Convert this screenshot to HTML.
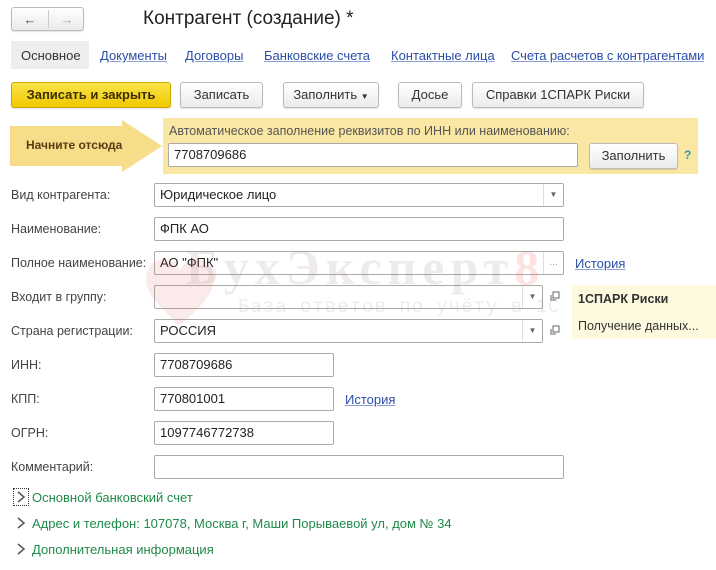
<!DOCTYPE html>
<html><head><meta charset="utf-8"><style>
*{box-sizing:border-box}
body{margin:0;width:716px;height:570px;background:#fff;font-family:"Liberation Sans",sans-serif;font-size:12.5px;color:#333;position:relative;overflow:hidden}
.a{position:absolute;white-space:nowrap}
.btn{position:absolute;height:26px;border:1px solid #bbb;border-radius:3px;background:linear-gradient(#fff,#ebebeb);text-align:center;line-height:24px;color:#333;font-size:13px;box-shadow:0 1px 1px rgba(0,0,0,.12)}
.in{position:absolute;height:24px;border:1px solid #aaa;border-radius:2px;background:#fff;line-height:22px;padding-left:5px;font-size:13px;color:#222}
.lbl{position:absolute;left:11px;font-size:12.5px;color:#444}
.lnk{position:absolute;color:#2a4fa8;text-decoration:underline;text-decoration-color:#8aa0d0;font-size:13px}
.dd{position:absolute;right:0;top:0;width:20px;height:22px;border-left:1px solid #ddd;font-size:8px;color:#666;text-align:center;line-height:22px}
.op{position:absolute;width:22px;height:24px}
.grn{position:absolute;color:#208a4a;font-size:13px;left:32px}
.chev{position:absolute;left:13px;width:16px;height:18px}
</style></head><body>
<div class="btn" style="left:11px;top:7px;width:73px;height:24px;padding:0"><span style="position:absolute;left:0;width:36px;font-weight:bold;color:#444">&#8592;</span><span style="position:absolute;left:36px;top:2px;height:18px;border-left:1px solid #ccc"></span><span style="position:absolute;left:37px;width:36px;color:#aaa">&#8594;</span></div>
<div class="a" style="left:143px;top:8px;font-size:19px;color:#222">Контрагент (создание) *</div>
<div class="a" style="left:11px;top:41px;width:78px;height:28px;background:#eee;border-radius:2px"></div>
<div class="a" style="left:21px;top:48px;font-size:13px;color:#333">Основное</div>
<div class="lnk" style="left:100px;top:48px">Документы</div>
<div class="lnk" style="left:185px;top:48px">Договоры</div>
<div class="lnk" style="left:264px;top:48px">Банковские счета</div>
<div class="lnk" style="left:391px;top:48px">Контактные лица</div>
<div class="lnk" style="left:511px;top:48px;letter-spacing:-0.1px">Счета расчетов с контрагентами</div>
<div class="btn" style="left:11px;top:82px;width:160px;background:linear-gradient(#fbe44a,#f0c800);border-color:#c9a800;font-weight:bold;color:#3a3000">Записать и закрыть</div>
<div class="btn" style="left:180px;top:82px;width:83px">Записать</div>
<div class="btn" style="left:283px;top:82px;width:96px">Заполнить <span style="font-size:8px">&#9660;</span></div>
<div class="btn" style="left:398px;top:82px;width:64px">Досье</div>
<div class="btn" style="left:472px;top:82px;width:172px">Справки 1СПАРК Риски</div>
<svg class="a" style="left:10px;top:120px" width="152" height="52"><polygon points="0,6 112,6 112,0 152,26 112,52 112,46 0,46" fill="#f7dc8a"/></svg>
<div class="a" style="left:26px;top:138px;font-weight:bold;color:#5a3a10;font-size:12px">Начните отсюда</div>
<div class="a" style="left:163px;top:118px;width:535px;height:56px;background:#fbe7a4"></div>
<div class="a" style="left:169px;top:124px;color:#555;font-size:12.5px">Автоматическое заполнение реквизитов по ИНН или наименованию:</div>
<div class="in" style="left:168px;top:143px;width:410px">7708709686</div>
<div class="btn" style="left:589px;top:143px;width:89px">Заполнить</div>
<div class="a" style="left:684px;top:148px;color:#2ea0a0;font-weight:bold;font-size:12px">?</div>
<div class="lbl" style="top:188px">Вид контрагента:</div>
<div class="in" style="left:154px;top:183px;width:410px">Юридическое лицо<div class="dd">&#9660;</div></div>
<div class="lbl" style="top:222px">Наименование:</div>
<div class="in" style="left:154px;top:217px;width:410px">ФПК АО</div>
<div class="lbl" style="top:256px">Полное наименование:</div>
<div class="in" style="left:154px;top:251px;width:410px">АО "ФПК"<div class="dd" style="color:#999;font-size:10px">...</div></div>
<div class="lnk" style="left:575px;top:256px">История</div>
<div class="lbl" style="top:290px">Входит в группу:</div>
<div class="in" style="left:154px;top:285px;width:389px"><div class="dd">&#9660;</div></div>
<svg class="op" style="left:543px;top:285px" viewBox="0 0 22 24"><rect x="10" y="7" width="6" height="6" fill="none" stroke="#666"/><path d="M8 10V15H13" fill="none" stroke="#666"/></svg>
<div class="a" style="left:572px;top:285px;width:144px;height:54px;background:#fdf9df"></div>
<div class="a" style="left:578px;top:292px;font-weight:bold;font-size:12.5px;color:#333">1СПАРК Риски</div>
<div class="a" style="left:578px;top:319px;font-size:12.5px;color:#333">Получение данных...</div>
<div class="lbl" style="top:324px">Страна регистрации:</div>
<div class="in" style="left:154px;top:319px;width:389px">РОССИЯ<div class="dd">&#9660;</div></div>
<svg class="op" style="left:543px;top:319px" viewBox="0 0 22 24"><rect x="10" y="7" width="6" height="6" fill="none" stroke="#666"/><path d="M8 10V15H13" fill="none" stroke="#666"/></svg>
<div class="lbl" style="top:358px">ИНН:</div>
<div class="in" style="left:154px;top:353px;width:180px">7708709686</div>
<div class="lbl" style="top:392px">КПП:</div>
<div class="in" style="left:154px;top:387px;width:180px">770801001</div>
<div class="lnk" style="left:345px;top:392px">История</div>
<div class="lbl" style="top:426px">ОГРН:</div>
<div class="in" style="left:154px;top:421px;width:180px">1097746772738</div>
<div class="lbl" style="top:460px">Комментарий:</div>
<div class="in" style="left:154px;top:455px;width:410px"></div>
<!-- watermark -->
<svg class="a" style="left:140px;top:250px;z-index:5" width="80" height="80"><path d="M40 75 C10 50 2 35 8 20 C14 6 32 6 40 20 C48 6 66 6 72 20 C78 35 70 50 40 75Z" fill="rgba(220,80,80,.12)"/></svg>
<div class="a" style="left:186px;top:238px;font-size:50px;font-weight:bold;font-family:'Liberation Serif',serif;color:rgba(150,110,110,.14);letter-spacing:6px;z-index:5">БухЭксперт<span style="color:rgba(240,110,100,.2)">8</span></div>
<div class="a" style="left:238px;top:296px;font-size:19px;font-family:'Liberation Mono',monospace;color:rgba(140,140,140,.17);letter-spacing:1px;z-index:5">База ответов по учёту в 1С</div>
<svg class="chev" style="top:488px;outline:1px dotted #333;outline-offset:-1px" viewBox="0 0 16 18"><path d="M5 4L11 9L5 14" fill="none" stroke="#555" stroke-width="1.5"/></svg>
<div class="grn" style="top:490px">Основной банковский счет</div>
<svg class="chev" style="top:514px" viewBox="0 0 16 18"><path d="M5 4L11 9L5 14" fill="none" stroke="#555" stroke-width="1.5"/></svg>
<div class="grn" style="top:516px">Адрес и телефон: 107078, Москва г, Маши Порываевой ул, дом № 34</div>
<svg class="chev" style="top:540px" viewBox="0 0 16 18"><path d="M5 4L11 9L5 14" fill="none" stroke="#555" stroke-width="1.5"/></svg>
<div class="grn" style="top:542px">Дополнительная информация</div>
</body></html>
